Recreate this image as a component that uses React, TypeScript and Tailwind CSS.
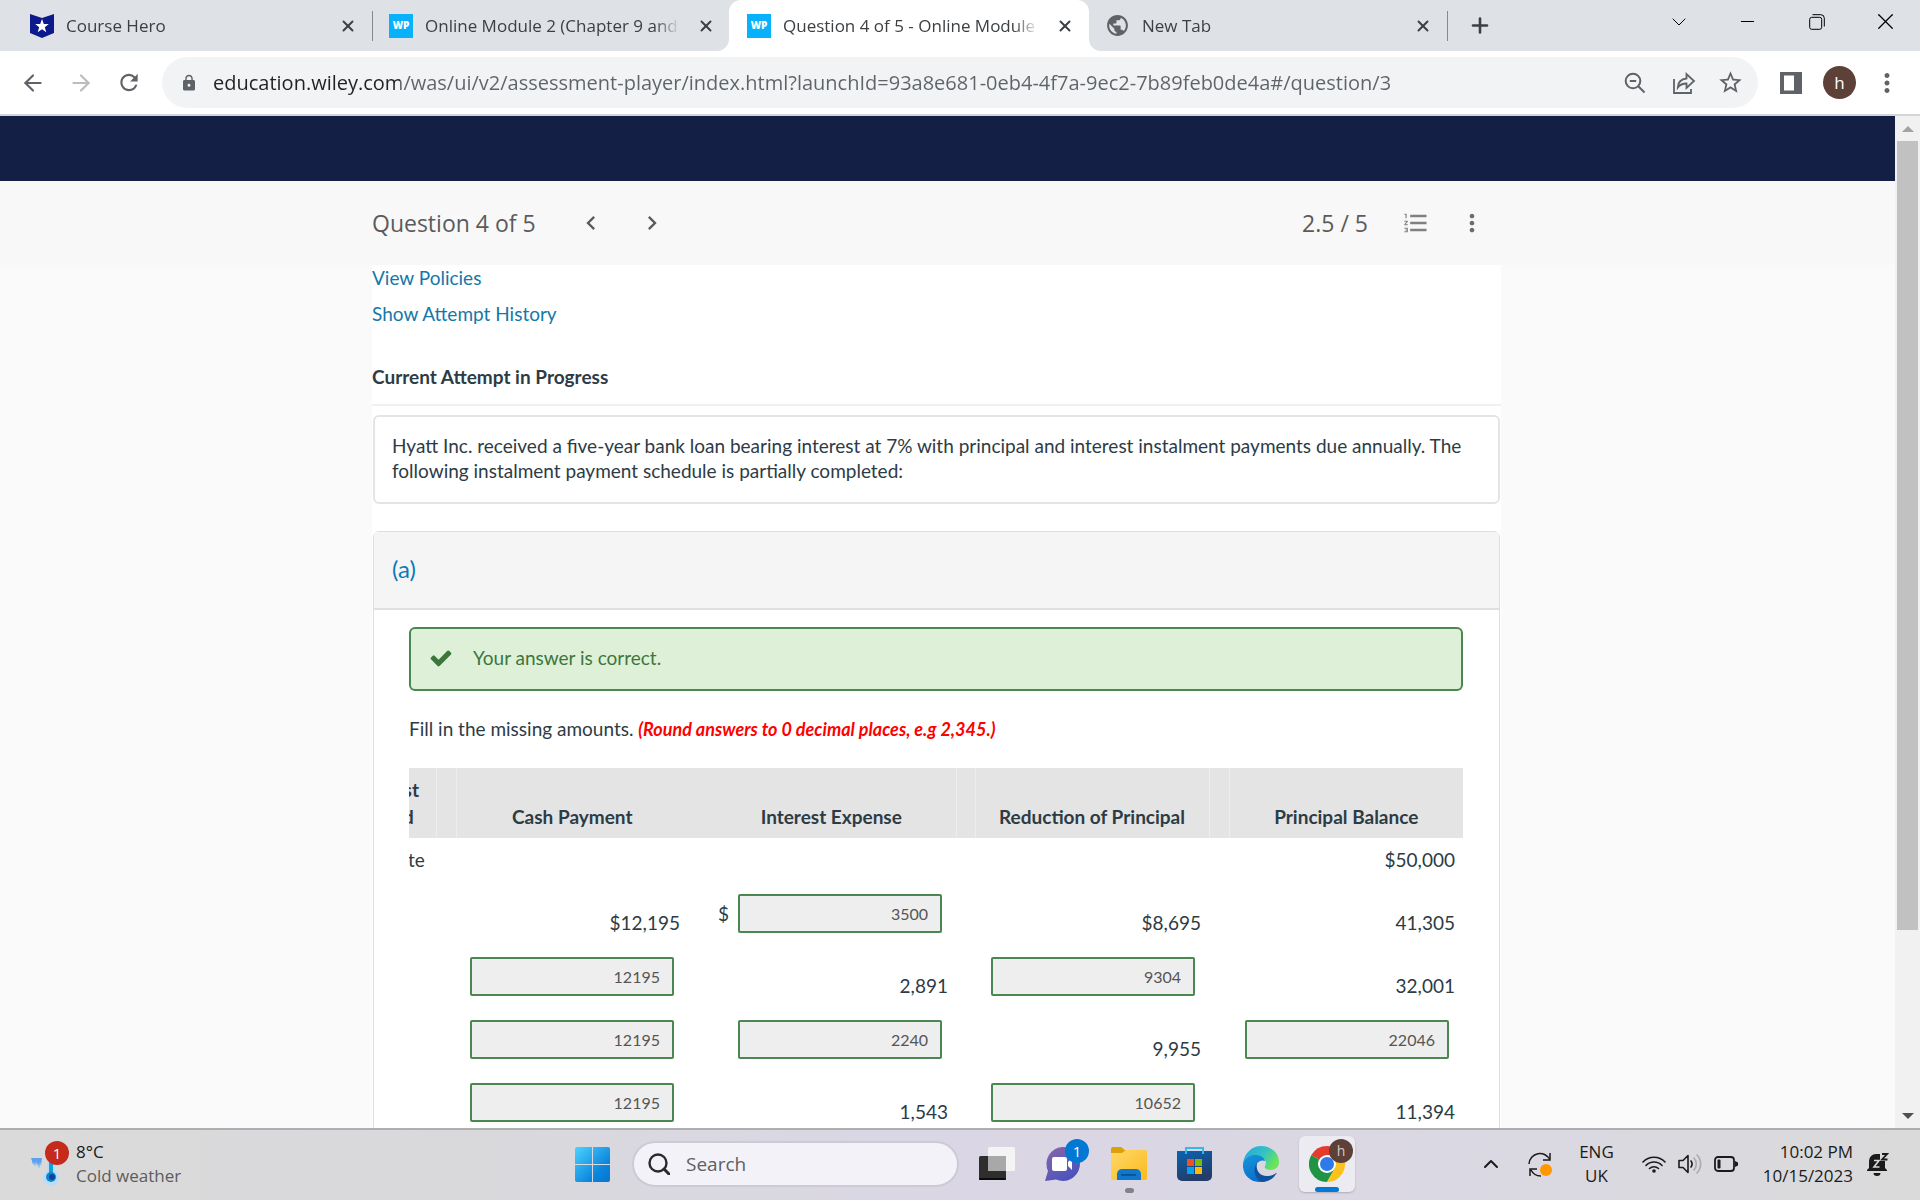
import type { ReactNode } from "react";
import { ArrowLeft, ArrowRight, ChevronDown, ChevronUp, Minus, Plus, X } from "lucide-react";
import {
  MdChevronLeft,
  MdChevronRight,
  MdFormatListNumbered,
  MdLock,
  MdMoreVert,
  MdPublic,
  MdRefresh,
  MdStarBorder,
} from "react-icons/md";

function CourseHeroIcon() {
  return (
    <svg viewBox="0 0 24 24" className="size-6 shrink-0">
      <path d="M0 0l12 4 12-4v19l-12 5-12-5z" fill="#0c1a8e" />
      <path d="M12 5l1.8 5h5l-4 3.2 1.5 5L12 15.200l-4.300 3 1.500-5-4-3.200h5z" fill="#fff" />
    </svg>
  );
}

function WpIcon() {
  return (
    <span className="flex size-6 shrink-0 items-center justify-center bg-[#08b1fc] text-[10px] font-extrabold text-white">
      WP
    </span>
  );
}

type TabProps = {
  icon: ReactNode;
  title: string;
  className: string;
  active?: boolean;
};

function Tab({ icon, title, className, active }: TabProps) {
  return (
    <div
      className={`relative flex h-full items-center text-[#3c4043] ${className} ${
        active ? "rounded-t-xl bg-white" : ""
      }`}
    >
      {active && (
        <>
          <span className="absolute bottom-0 -left-3 size-3 overflow-hidden">
            <span className="block size-3 rounded-br-xl shadow-[6px_6px_0_6px_white]" />
          </span>
          <span className="absolute -right-3 bottom-0 size-3 overflow-hidden">
            <span className="block size-3 rounded-bl-xl shadow-[-6px_6px_0_6px_white]" />
          </span>
        </>
      )}
      {icon}
      <span className="ml-3 flex-1 overflow-hidden whitespace-nowrap text-[17px] leading-6 [mask-image:linear-gradient(to_right,black_90%,transparent)]">
        {title}
      </span>
      <button aria-label="Close tab" className="ml-4 flex size-5 items-center justify-center">
        <X size={18} strokeWidth={2.6} />
      </button>
    </div>
  );
}

function TabStrip() {
  return (
    <div className="flex h-[51px] shrink-0 items-center bg-[#dee1e6]">
      <Tab icon={<CourseHeroIcon />} title="Course Hero" className="w-[372px] pr-[14px] pl-[30px]" />
      <span className="h-[30px] w-px bg-[#85888d]" />
      <Tab icon={<WpIcon />} title="Online Module 2 (Chapter 9 and" className="w-[356px] pr-[13px] pl-4" />
      <Tab
        active
        icon={<WpIcon />}
        title="Question 4 of 5 - Online Module"
        className="w-[360px] pr-[14px] pl-[18px]"
      />
      <Tab
        icon={<MdPublic size={25} className="shrink-0 text-[#5f6368]" />}
        title="New Tab"
        className="w-[358px] pr-[14px] pl-4"
      />
      <span className="h-[30px] w-px bg-[#85888d]" />
      <button aria-label="New tab" className="ml-5 flex size-6 items-center justify-center text-[#3c4043]">
        <Plus size={25} strokeWidth={2.6} />
      </button>
      <div className="mb-2 ml-auto flex text-black">
        <button aria-label="Search tabs" className="flex w-[69px] items-center justify-center">
          <ChevronDown size={24} strokeWidth={1} />
        </button>
        <button aria-label="Minimise" className="flex w-[69px] items-center justify-center">
          <Minus size={21} strokeWidth={1.2} />
        </button>
        <button aria-label="Restore" className="flex w-[69px] items-center justify-center">
          <svg viewBox="0 0 16 16" className="size-4" fill="none" stroke="currentColor">
            <rect x="0.7" y="3.300" width="12" height="12" rx="2" />
            <path d="M3.500.7h8.300a3.500 3.500 0 0 1 3.500 3.500v8.300" />
          </svg>
        </button>
        <button aria-label="Close window" className="flex w-[69px] items-center justify-center">
          <X size={27} strokeWidth={1.1} />
        </button>
      </div>
    </div>
  );
}

function Toolbar() {
  return (
    <div className="flex h-[65px] shrink-0 items-center border-b-2 border-[#d5d6d9] bg-white pr-[18px] text-[#5f6368]">
      <button aria-label="Back" className="ml-5 flex w-[26px] justify-center">
        <ArrowLeft size={28} strokeWidth={2} />
      </button>
      <button aria-label="Forward" className="ml-[22px] flex w-[26px] justify-center text-[#babcbe]">
        <ArrowRight size={28} strokeWidth={2} />
      </button>
      <button aria-label="Reload" className="ml-[22px] flex w-[26px] justify-center">
        <MdRefresh size={29} />
      </button>
      <div className="ml-5 flex h-[51px] min-w-0 flex-1 items-center rounded-full bg-[#f1f3f4] pr-[14px] pl-[18px]">
        <MdLock size={18} className="shrink-0" />
        <input
          aria-label="Address"
          readOnly
          value="education.wiley.com/was/ui/v2/assessment-player/index.html?launchId=93a8e681-0eb4-4f7a-9ec2-7b89feb0de4a#/question/3"
          className="ml-[15px] min-w-0 flex-1 bg-[linear-gradient(to_right,#202124_187px,#5f6368_187px)] bg-clip-text text-[20px] leading-7 text-transparent outline-none"
        />
        <button aria-label="Zoom" className="ml-4">
          <svg viewBox="0 0 22 22" className="size-[22px]" fill="none" stroke="currentColor" strokeWidth="2">
            <circle cx="9" cy="9" r="7.300" />
            <path d="M5.800 9h6.400M14.300 14.300l6.200 6.200" />
          </svg>
        </button>
        <button aria-label="Share" className="ml-[26px]">
          <svg viewBox="0 0 24 24" className="size-6" fill="none" stroke="currentColor" strokeWidth="1.800">
            <path d="M2 8v14h17v-4" />
            <path d="M14.500 3v4.500C9 8 6 11.500 5.800 16.500c2.200-3 4.800-4 8.700-4V17l7.500-7z" />
          </svg>
        </button>
        <button aria-label="Bookmark" className="ml-[21px]">
          <MdStarBorder size={27} />
        </button>
      </div>
      <button aria-label="Side panel" className="ml-[22px]">
        <svg viewBox="0 0 22 22" className="size-[22px]">
          <path fillRule="evenodd" d="M0 0h22v22H0zM4 3.500v15h10v-15z" fill="currentColor" />
        </svg>
      </button>
      <button
        aria-label="Profile"
        className="ml-[21px] flex size-[33px] items-center justify-center rounded-full bg-[#5d4037] text-[17px] leading-6 text-white"
      >
        h
      </button>
      <button aria-label="Browser menu" className="ml-4">
        <MdMoreVert size={30} />
      </button>
    </div>
  );
}

function QuestionHeader() {
  return (
    <header className="bg-[#f8f8f8] pr-[22px] font-['Open_Sans',sans-serif] text-[#5b5b5b]">
      <div className="mx-auto flex h-[84px] max-w-[1129px] items-center">
        <h1 className="text-[23px] leading-8">Question 4 of 5</h1>
        <button aria-label="Previous question" className="ml-[41px]">
          <MdChevronLeft size={28} />
        </button>
        <button aria-label="Next question" className="ml-[33px]">
          <MdChevronRight size={28} />
        </button>
        <span className="ml-auto text-[23px] leading-8">2.5 / 5</span>
        <button aria-label="Question list" className="ml-[34px] text-[#808080]">
          <MdFormatListNumbered size={28} />
        </button>
        <button aria-label="More options" className="mr-[15px] ml-7 text-[#6b6b6b]">
          <MdMoreVert size={28} />
        </button>
      </div>
    </header>
  );
}

type Cell = { text?: string; answer?: string; prefix?: string };

const rows: { label: string; cells: Cell[] }[] = [
  { label: "Issue date", cells: [{}, {}, {}, { text: "$50,000" }] },
  { label: "1", cells: [{ text: "$12,195" }, { answer: "3500", prefix: "$" }, { text: "$8,695" }, { text: "41,305" }] },
  { label: "2", cells: [{ answer: "12195" }, { text: "2,891" }, { answer: "9304" }, { text: "32,001" }] },
  { label: "3", cells: [{ answer: "12195" }, { answer: "2240" }, { text: "9,955" }, { answer: "22046" }] },
  { label: "4", cells: [{ answer: "12195" }, { text: "1,543" }, { answer: "10652" }, { text: "11,394" }] },
];

const columns = ["Cash Payment", "Interest Expense", "Reduction of Principal", "Principal Balance"];

function AmountCell({ cell, label }: { cell: Cell; label: string }) {
  return (
    <td className="px-2 pb-[9px] text-right align-bottom">
      {cell.answer ? (
        <div className="mr-[6px] mb-[3px] flex items-center justify-end gap-[9px]">
          {cell.prefix && <span>{cell.prefix}</span>}
          <input
            aria-label={label}
            readOnly
            value={cell.answer}
            className="h-[39px] w-[204px] rounded-xs border-2 border-[#4b8750] bg-[#eee] px-3 text-right text-base leading-6 text-[#555] outline-none"
          />
        </div>
      ) : (
        cell.text
      )}
    </td>
  );
}

function ScheduleTable() {
  return (
    <div className="flex justify-end overflow-hidden">
      <table className="w-[1126px] shrink-0 table-fixed border-collapse leading-[27px]">
        <colgroup>
          <col className="w-[99px]" />
          <col className="w-5" />
          <col className="w-[232px]" />
          <col className="w-[19px]" />
          <col className="w-[249px]" />
          <col className="w-[19px]" />
          <col className="w-[234px]" />
          <col className="w-5" />
          <col />
        </colgroup>
        <thead>
          <tr className="h-[70px] bg-[#e4e4e4] align-bottom">
            <th className="px-2 pb-2 font-bold">Interest Period</th>
            {columns.map((name, i) => [
              <td key={`gap-${name}`} className={i === 1 ? "" : "border-x border-[#ededed]"} />,
              <th key={name} className="px-2 pb-2 font-bold whitespace-nowrap">
                {name}
              </th>,
            ])}
          </tr>
        </thead>
        <tbody>
          {rows.map((row, r) => (
            <tr key={row.label} className={r === 0 ? "h-11" : "h-[63px]"}>
              <td className="px-1 pb-[9px] align-bottom whitespace-nowrap">{row.label}</td>
              {row.cells.map((cell, i) => [
                <td key={`gap-${i}`} />,
                <AmountCell key={i} cell={cell} label={`${columns[i]}, period ${row.label}`} />,
              ])}
            </tr>
          ))}
        </tbody>
      </table>
    </div>
  );
}

function Assessment() {
  return (
    <main className="min-h-0 flex-1 overflow-hidden bg-[#fafafa] pr-[22px] font-[Lato,sans-serif] text-[19px] leading-[25px] text-[#2d3b45]">
      <div className="mx-auto max-w-[1129px] bg-white">
        <div className="flex flex-col items-start gap-[11px] text-[#1577a8]">
          <a href="#policies">View Policies</a>
          <a href="#history">Show Attempt History</a>
        </div>
        <h2 className="mt-[38px] border-b-2 border-[#f0f0f0] pb-[15px] font-bold">Current Attempt in Progress</h2>
        <p className="mx-px mt-[9px] rounded-md border-2 border-[#e3e5e5] px-[17px] pt-4 pb-[19px]">
          Hyatt Inc. received a five-year bank loan bearing interest at 7% with principal and interest instalment
          payments due annually. The following instalment payment schedule is partially completed:
        </p>
        <section className="mx-px mt-[27px] rounded-t-md border border-[#dcdedf]">
          <h3 className="border-b-2 border-[#dfe0e1] bg-[#f5f5f5] px-[18px] pt-6 pb-[26px] text-2xl leading-[26px] text-[#0b7cb5]">
            (a)
          </h3>
          <div className="pt-[17px] pr-9 pl-[35px]">
            <div className="flex h-[64px] items-center rounded-md border-2 border-[#4b8750] bg-[#dff0d8] pb-[3px] pl-[18px] text-[#3c763d]">
              <svg viewBox="0 0 1792 1792" className="size-6" fill="currentColor">
                <path d="M1671 566q0 40-28 68l-724 724-136 136q-28 28-68 28t-68-28l-136-136-362-362q-28-28-28-68t28-68l136-136q28-28 68-28t68 28l294 295 656-657q28-28 68-28t68 28l136 136q28 28 28 68z" />
              </svg>
              <span className="ml-5">Your answer is correct.</span>
            </div>
            <p className="mt-[25px] mb-[26px]">
              Fill in the missing amounts.{" "}
              <em className="text-[18px] font-bold text-[#f00]">(Round answers to 0 decimal places, e.g 2,345.)</em>
            </p>
            <ScheduleTable />
          </div>
        </section>
      </div>
    </main>
  );
}

function Scrollbar() {
  return (
    <div className="flex w-[25px] shrink-0 flex-col items-center bg-[#f1f1f1]">
      <div className="flex h-[25px] items-center">
        <svg viewBox="0 0 12 6" className="h-[6px] w-3">
          <path d="M0 6l6-6 6 6z" fill="#a3a3a3" />
        </svg>
      </div>
      <div className="h-[78%] w-[21px] bg-[#c1c1c1]" />
      <div className="mt-auto flex h-[25px] items-center">
        <svg viewBox="0 0 12 6" className="h-[6px] w-3">
          <path d="M0 0h12L6 6z" fill="#505050" />
        </svg>
      </div>
    </div>
  );
}

function WeatherIcon() {
  return (
    <svg viewBox="0 0 38 46" className="h-[46px] w-[38px]">
      <path d="M0 17h11l-1 8-1-4-1 7-1-6-1 3-1-5-1 6-1-5-1 3-1-4z" fill="#5ba3ee" />
      <path d="M16 12a4 4 0 0 1 8 0v18a8 8 0 1 1-8 0z" fill="#b9ddf8" />
      <path d="M18 14h4v18h-4z" fill="#0fa3dc" />
      <circle cx="20" cy="36" r="5" fill="#0c86d2" />
      <circle cx="21" cy="36" r="3" fill="#0b459c" />
      <circle cx="26" cy="12" r="12" fill="#c42b1c" />
      <text x="26" y="17.500" textAnchor="middle" fontSize="15" fill="#fff">
        1
      </text>
    </svg>
  );
}

function WindowsLogo() {
  return (
    <svg viewBox="0 0 35 35" className="size-[35px]">
      <defs>
        <linearGradient id="win" x1="0" y1="0" x2="1" y2="1">
          <stop offset="0" stopColor="#4cd3ff" />
          <stop offset="0.7" stopColor="#0a84dd" />
          <stop offset="1" stopColor="#0675d0" />
        </linearGradient>
      </defs>
      <path
        fill="url(#win)"
        d="M2 0h15v17H0V2a2 2 0 0 1 2-2zM18 0h15a2 2 0 0 1 2 2v15H18zM0 18h17v17H2a2 2 0 0 1-2-2zM18 18h17v15a2 2 0 0 1-2 2H18z"
      />
    </svg>
  );
}

function TaskViewIcon() {
  return (
    <svg viewBox="0 0 36 36" className="size-9">
      <rect y="10" width="27" height="24" rx="1.500" fill="#2e2e2e" />
      <rect y="32" width="27" height="2" rx="1" fill="#0c0c0c" />
      <rect x="9" y="1" width="27" height="24" rx="1.500" fill="#f4f4f4" />
      <path d="M9 10h18v15H9z" fill="#a8a8a8" />
    </svg>
  );
}

function ChatIcon() {
  return (
    <svg viewBox="0 0 44 44" className="size-11">
      <defs>
        <linearGradient id="chat" x1="0" y1="0" x2="0.6" y2="1">
          <stop offset="0" stopColor="#8c66a8" />
          <stop offset="1" stopColor="#4b53bc" />
        </linearGradient>
      </defs>
      <path d="M17 9a17 17 0 1 1-6 32.500L0 43l3-10A17 17 0 0 1 17 9z" fill="url(#chat)" />
      <rect x="7" y="19" width="15" height="14" rx="2" fill="#fff" />
      <path d="M23 24l4-4v12l-4-4z" fill="#fff" />
      <circle cx="32" cy="13" r="12" fill="#0078d4" />
      <text x="32" y="18.500" textAnchor="middle" fontSize="15" fill="#fff">
        1
      </text>
    </svg>
  );
}

function FolderIcon() {
  return (
    <svg viewBox="0 0 36 34" className="h-[34px] w-9">
      <defs>
        <linearGradient id="folder" x1="0" y1="0" x2="1" y2="1">
          <stop offset="0" stopColor="#ffd968" />
          <stop offset="1" stopColor="#fbb91d" />
        </linearGradient>
      </defs>
      <path d="M0 2a2 2 0 0 1 2-2h8l5 4v3H0z" fill="#dda009" />
      <path d="M0 6h11l4-3h19a2 2 0 0 1 2 2v26a2 2 0 0 1-2 2H2a2 2 0 0 1-2-2z" fill="url(#folder)" />
      <path d="M6 33v-6a5 5 0 0 1 5-5h14a5 5 0 0 1 5 5v6z" fill="#0f78cc" />
      <rect x="10" y="27" width="15" height="1.800" rx="0.9" fill="#0a4f92" />
    </svg>
  );
}

function StoreIcon() {
  return (
    <svg viewBox="0 0 36 36" className="size-9">
      <defs>
        <linearGradient id="store" x1="0" y1="0" x2="0.4" y2="1">
          <stop offset="0" stopColor="#0a64b2" />
          <stop offset="1" stopColor="#233c68" />
        </linearGradient>
      </defs>
      <path d="M0 5h35v25a5 5 0 0 1-5 5H5a5 5 0 0 1-5-5z" fill="url(#store)" />
      <path d="M9 8V2h17v6" fill="none" stroke="#32b8f0" strokeWidth="2" />
      <path d="M10 13h7v7h-7z" fill="#f25022" />
      <path d="M18 13h7v7h-7z" fill="#7fba00" />
      <path d="M10 21h7v7h-7z" fill="#00a4ef" />
      <path d="M18 21h7v7h-7z" fill="#ffb900" />
    </svg>
  );
}

function EdgeIcon() {
  return (
    <svg viewBox="0 0 36 36" className="size-9">
      <defs>
        <linearGradient id="edgeTop" x1="0" y1="0" x2="1" y2="0.5">
          <stop offset="0" stopColor="#22a5e0" />
          <stop offset="0.6" stopColor="#35c3c0" />
          <stop offset="1" stopColor="#6be35a" />
        </linearGradient>
        <linearGradient id="edgeSide" x1="0" y1="0" x2="0.4" y2="1">
          <stop offset="0" stopColor="#1796dd" />
          <stop offset="1" stopColor="#0b6fcb" />
        </linearGradient>
      </defs>
      <path d="M0 18C1 7 9 0 18 0c10 0 18 7 18 16 0 5-4 8-8 8-5 0-7-2-6-4 2-3 1-7-4-8C12 9 4 11 0 18z" fill="url(#edgeTop)" />
      <path d="M0 18C2 11 8 9 12 9c5 0 9 2 10 6-4-2-9 1-9 7 0 6 4 11 10 13-12 4-24-4-23-17z" fill="url(#edgeSide)" />
      <path d="M14 17c-2 8 4 14 11 13 4 0 7-2 8-3 1 0 1 0 0 1-3 5-8 8-14 8C12 33 9 24 14 17z" fill="#11529c" />
    </svg>
  );
}

function ChromeIcon() {
  return (
    <svg viewBox="0 0 44 44" className="size-11">
      <path d="M18 26L2.400 17A18 18 0 0 1 33.600 17z" fill="#e33b2e" />
      <path d="M18 26L2.400 17A18 18 0 0 0 18 44L25.800 30.500z" fill="#219344" />
      <path d="M18 26l7.800 4.500L18 44A18 18 0 0 0 33.600 17H18z" fill="#fcc21b" />
      <circle cx="18" cy="26" r="9" fill="#fff" />
      <circle cx="18" cy="26" r="7" fill="#3079e8" />
      <circle cx="32" cy="13" r="12" fill="#5d4037" />
      <text x="32" y="18" textAnchor="middle" fontSize="14" fill="#d9c9c4">
        h
      </text>
    </svg>
  );
}

function SyncIcon() {
  return (
    <svg viewBox="0 0 26 26" className="size-[26px]" fill="none" stroke="#1b1b1b" strokeWidth="1.500">
      <path d="M2 13a11 11 0 0 1 21-4M23 2v7h-7M14 25a11 11 0 0 1-10-6M3 25v-7h7" />
      <circle cx="19" cy="19" r="6" fill="#ff9800" stroke="none" />
    </svg>
  );
}

function WifiIcon() {
  return (
    <svg viewBox="0 0 24 18" className="h-[18px] w-6" fill="none" stroke="#1b1b1b" strokeWidth="1.600">
      <path d="M1 7a15 15 0 0 1 22 0M4 10.500a11 11 0 0 1 16 0M7.500 13.500a6.500 6.500 0 0 1 9 0" strokeLinecap="round" />
      <circle cx="12" cy="16" r="1.800" fill="#1b1b1b" stroke="none" />
    </svg>
  );
}

function SpeakerIcon() {
  return (
    <svg viewBox="0 0 24 20" className="h-5 w-6" fill="none" stroke="#1b1b1b" strokeWidth="1.600" strokeLinejoin="round">
      <path d="M1 6.500h4l5-5v17l-5-5H1z" />
      <path d="M13 7a5 5 0 0 1 0 6" strokeLinecap="round" />
      <path d="M16 4a9 9 0 0 1 0 12M19 1a13 13 0 0 1 0 18" stroke="#a9a9ae" strokeLinecap="round" />
    </svg>
  );
}

function BatteryIcon() {
  return (
    <svg viewBox="0 0 24 16" className="h-4 w-6" fill="none" stroke="#1b1b1b" strokeWidth="1.800">
      <rect x="1" y="1" width="19" height="14" rx="3" />
      <path d="M21 5l3 1.500v3L21 11z" fill="#1b1b1b" stroke="none" />
      <rect x="3.500" y="3.500" width="3" height="9" rx="1" fill="#1b1b1b" stroke="none" />
    </svg>
  );
}

function BellIcon() {
  return (
    <svg viewBox="0 0 22 24" className="h-6 w-[22px]" fill="#1b1b1b">
      <path d="M2 16V9a7 7 0 0 1 7-7h4v7h5v7l2 2v1H0v-1z" />
      <path d="M6.500 21h7a3.500 3 0 0 1-7 0z" />
      <path d="M15 2h5l-5 5.500h5.500" fill="none" stroke="#1b1b1b" strokeWidth="1.800" />
      <path d="M7 8.500h5L7 15h5.500" fill="none" stroke="#dadadb" strokeWidth="1.600" />
    </svg>
  );
}

function Taskbar() {
  return (
    <footer className="flex h-[72px] shrink-0 items-center border-t-2 border-[#aeadb0] bg-[linear-gradient(to_right,#dadada,#d9d9dc_25%,#dad6e5_50%,#dad8e3_75%,#dadada)] pb-[2px] pl-[10px] text-[17px] leading-6 text-[#1b1b1b]">
      <button className="flex flex-1 items-center pl-[21px] text-left">
        <WeatherIcon />
        <span className="ml-[7px]">
          <span className="block">8°C</span>
          <span className="block text-[#5c5c5c]">Cold weather</span>
        </span>
      </button>
      <div className="flex items-center">
        <button aria-label="Start">
          <WindowsLogo />
        </button>
        <label className="ml-[22px] flex h-[46px] w-[327px] items-center rounded-full border-2 border-[#cdcad6] bg-[#f3f2f8] pl-[14px]">
          <svg viewBox="0 0 22 22" className="size-[22px] shrink-0" fill="none" stroke="#2a2a2a" strokeWidth="2.400">
            <circle cx="10" cy="10" r="8.500" />
            <path d="M16 16l5 5" strokeLinecap="round" strokeWidth="3" />
          </svg>
          <input
            aria-label="Search"
            placeholder="Search"
            className="ml-4 w-full min-w-0 bg-transparent text-[19px] leading-7 outline-none placeholder:text-[#5f5f62]"
          />
        </label>
        <button aria-label="Task view" className="ml-5">
          <TaskViewIcon />
        </button>
        <button aria-label="Chat" className="mb-[9px] ml-[30px]">
          <ChatIcon />
        </button>
        <button aria-label="File Explorer" className="relative ml-[22px]">
          <FolderIcon />
          <span className="absolute -bottom-3 left-[14px] h-[5px] w-[9px] rounded-full bg-[#84818a]" />
        </button>
        <button aria-label="Microsoft Store" className="ml-[30px]">
          <StoreIcon />
        </button>
        <button aria-label="Edge" className="ml-[30px]">
          <EdgeIcon />
        </button>
        <button
          aria-label="Chrome"
          className="relative ml-5 flex h-14 w-14 items-start justify-end rounded-md bg-[#edebf2] pt-[2px] pr-[2px] shadow-[0_1px_2px_#0003]"
        >
          <ChromeIcon />
          <span className="absolute bottom-0 left-4 h-[5px] w-6 rounded-full bg-[#0078d4]" />
        </button>
      </div>
      <div className="flex flex-1 items-center justify-end pr-[21px]">
        <button aria-label="Show hidden icons">
          <ChevronUp size={24} strokeWidth={2} />
        </button>
        <button aria-label="Sync" className="ml-6">
          <SyncIcon />
        </button>
        <button className="ml-[26px] text-center">
          ENG
          <br />
          UK
        </button>
        <button aria-label="Network, volume and battery" className="ml-7 flex items-center gap-3">
          <WifiIcon />
          <SpeakerIcon />
          <BatteryIcon />
        </button>
        <button className="ml-[25px] text-right">
          10:02 PM
          <br />
          10/15/2023
        </button>
        <button aria-label="Notifications" className="mr-[10px] ml-[14px]">
          <BellIcon />
        </button>
      </div>
    </footer>
  );
}

export default function App() {
  return (
    <div className="flex h-screen flex-col overflow-hidden font-['Open_Sans',sans-serif]">
      <TabStrip />
      <Toolbar />
      <div className="flex min-h-0 flex-1">
        <div className="flex min-w-0 flex-1 flex-col">
          <div className="h-[65px] shrink-0 bg-[#131f45]" />
          <QuestionHeader />
          <Assessment />
        </div>
        <Scrollbar />
      </div>
      <Taskbar />
    </div>
  );
}
